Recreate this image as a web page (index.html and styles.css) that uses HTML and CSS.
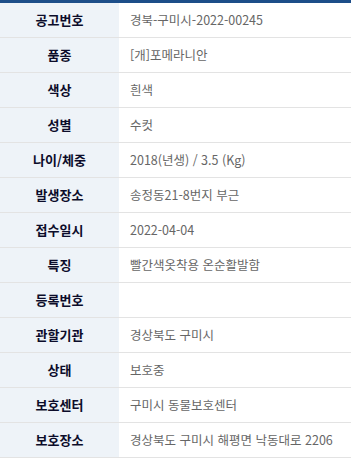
FILE: index.html
```html
<!DOCTYPE html>
<html lang="ko">
<head>
<meta charset="utf-8">
<link rel="stylesheet" href="styles.css">
</head>
<body>
<table class="info">
  <tbody>
    <tr><th>공고번호</th><td>경북-구미시-2022-00245</td></tr>
    <tr><th>품종</th><td>[개]포메라니안</td></tr>
    <tr><th>색상</th><td>흰색</td></tr>
    <tr><th>성별</th><td>수컷</td></tr>
    <tr><th>나이/체중</th><td>2018(년생) / 3.5 (Kg)</td></tr>
    <tr><th>발생장소</th><td>송정동21-8번지 부근</td></tr>
    <tr><th>접수일시</th><td>2022-04-04</td></tr>
    <tr><th>특징</th><td>빨간색옷착용 온순활발함</td></tr>
    <tr><th>등록번호</th><td></td></tr>
    <tr><th>관할기관</th><td>경상북도 구미시</td></tr>
    <tr><th>상태</th><td>보호중</td></tr>
    <tr><th>보호센터</th><td>구미시 동물보호센터</td></tr>
    <tr><th>보호장소</th><td>경상북도 구미시 해평면 낙동대로 2206</td></tr>
  </tbody>
</table>
</body>
</html>
```
FILE: styles.css
```css
html, body {
  margin: 0;
  padding: 0;
  background: #fff;
}
.info {
  width: 100%;
  border-collapse: collapse;
  border-top: 3px solid #1d4e89;
  font-family: "Noto Sans CJK KR", "Noto Sans", sans-serif;
  font-size: 13px;
}
.info th,
.info td {
  height: 34px;
  padding: 0;
  border-bottom: 1px solid #e3e3e3;
  vertical-align: middle;
  line-height: 16px;
}
.info th {
  width: 119px;
  background: #eef3f8;
  color: #0c0c2a;
  font-weight: bold;
  text-align: center;
}
.info td {
  padding-left: 11px;
  color: #666;
  font-size: 12.5px;
  text-align: left;
}
```
